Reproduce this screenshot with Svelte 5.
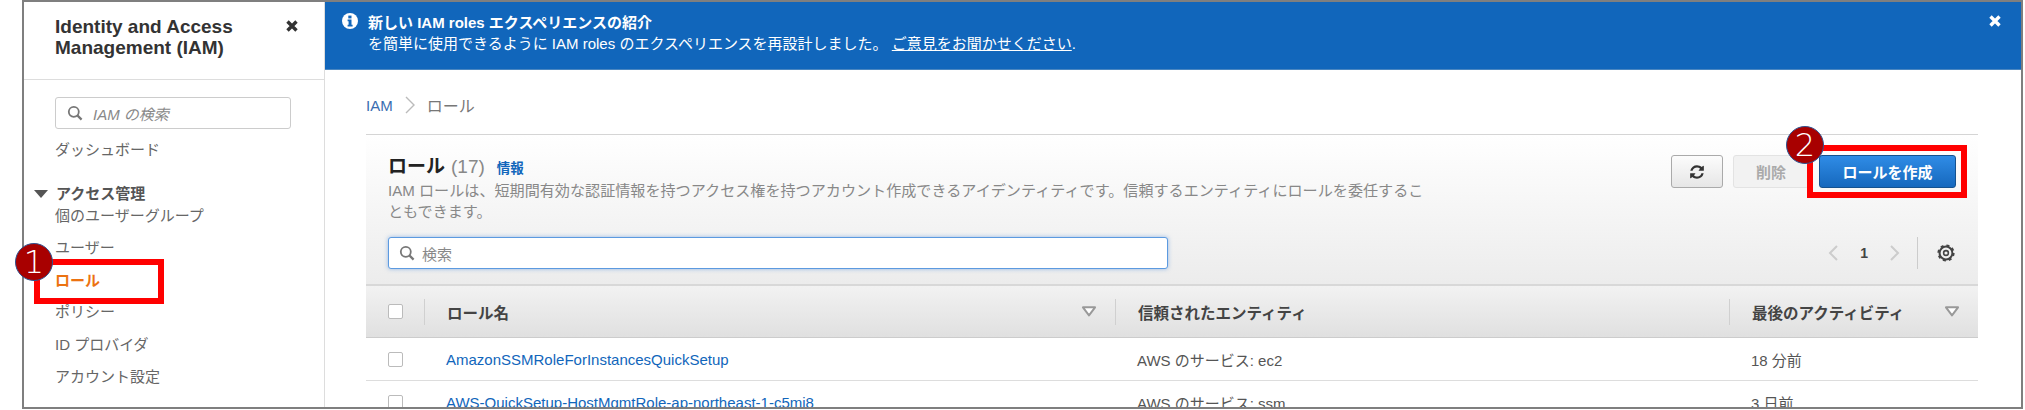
<script lang="ts">
  const navItems = [
    { label: '個のユーザーグループ', top: 2 },
    { label: 'ユーザー', top: 12 },
    { label: 'ロール', top: 13, active: true },
    { label: 'ポリシー', top: 11 },
    { label: 'ID プロバイダ', top: 13 },
    { label: 'アカウント設定', top: 12 }
  ];
  const rows = [
    { name: 'AmazonSSMRoleForInstancesQuickSetup', entity: 'AWS のサービス: ec2', last: '18 分前' },
    { name: 'AWS-QuickSetup-HostMgmtRole-ap-northeast-1-c5mj8', entity: 'AWS のサービス: ssm', last: '3 日前' }
  ];
</script>

{#snippet closeIcon()}
  <svg viewBox="0 0 14 14" width="14" height="14"><path d="M2.5 2.5l9 9M11.5 2.5l-9 9" stroke="currentColor" stroke-width="3.4" fill="none" /></svg>
{/snippet}

{#snippet searchIcon()}
  <svg viewBox="0 0 16 16" width="16" height="16"><circle cx="6.8" cy="6.8" r="5" stroke="#777" stroke-width="1.8" fill="none" /><path d="M10.6 10.6l4 4" stroke="#777" stroke-width="2.2" /></svg>
{/snippet}

{#snippet sortIcon()}
  <svg viewBox="0 0 14 10" width="16" height="11"><path d="M1.5 1.2h11L7 8.6z" fill="#fff" stroke="#999" stroke-width="1.8" stroke-linejoin="round" /></svg>
{/snippet}

<div class="page">
  <div class="frame">
    <aside class="sidebar">
      <div class="side-head">
        <div class="side-title">Identity and Access<br />Management (IAM)</div>
        <span class="side-close">{@render closeIcon()}</span>
      </div>
      <div class="side-search">
        {@render searchIcon()}
        <span>IAM の検索</span>
      </div>
      <div class="nav-link dash">ダッシュボード</div>
      <div class="nav-group">
        <svg class="caret" viewBox="0 0 14 8" width="14" height="8"><path d="M0 0h14L7 8z" fill="#555" /></svg>
        アクセス管理
      </div>
      {#each navItems as item}
        <div class="nav-link" class:active={item.active} style="margin-top: {item.top}px">{item.label}</div>
      {/each}
    </aside>

    <main class="main">
      <div class="banner">
        <svg class="info" viewBox="0 0 16 16" width="16" height="16">
          <circle cx="8" cy="8" r="8" fill="#fff" />
          <rect x="6.3" y="2.6" width="3.2" height="2.8" fill="#1166bb" />
          <path d="M5.6 6.6h3.9v5.2h1.1v1.7H5.6v-1.7h1v-3.5h-1z" fill="#1166bb" />
        </svg>
        <div class="banner-text">
          <div class="banner-title">新しい IAM roles エクスペリエンスの紹介</div>
          <div class="banner-body">を簡単に使用できるように IAM roles のエクスペリエンスを再設計しました。 <u>ご意見をお聞かせください</u>.</div>
        </div>
        <span class="banner-close">{@render closeIcon()}</span>
      </div>

      <div class="content">
        <div class="crumbs">
          <span class="crumb-link">IAM</span>
          <svg viewBox="0 0 10 18" width="10" height="18"><path d="M1 1l8 8-8 8" stroke="#bbb" stroke-width="1.4" fill="none" /></svg>
          <span>ロール</span>
        </div>

        <section class="panel">
          <div class="panel-head">
            <div class="head-row">
              <div class="head-text">
                <div class="title-line">
                  <h1>ロール</h1>
                  <span class="count">(17)</span>
                  <span class="info-link">情報</span>
                </div>
                <p>IAM ロールは、短期間有効な認証情報を持つアクセス権を持つアカウント作成できるアイデンティティです。信頼するエンティティにロールを委任することもできます。</p>
              </div>
              <div class="actions">
                <button class="btn refresh" aria-label="更新">
                  <svg viewBox="0 0 1792 1792" width="16" height="16"><path fill="#333" d="M1639 1056q0 5-1 7-64 268-268 434.5t-478 166.5q-146 0-282.5-55t-243.5-157l-129 129q-19 19-45 19t-45-19-19-45v-448q0-26 19-45t45-19h448q26 0 45 19t19 45-19 45l-137 137q71 66 161 102t187 36q134 0 250-65t186-179q11-17 53-117 8-23 30-23h192q13 0 22.5 9.5t9.5 22.5zm25-800v448q0 26-19 45t-45 19h-448q-26 0-45-19t-19-45 19-45l138-138q-148-137-349-137-134 0-250 65t-186 179q-11 17-53 117-8 23-30 23h-199q-13 0-22.5-9.5t-9.5-22.5v-7q65-268 270-434.5t480-166.5q146 0 284 55.5t245 156.5l130-129q19-19 45-19t45 19 19 45z" /></svg>
                </button>
                <button class="btn delete">削除</button>
                <button class="btn primary">ロールを作成</button>
              </div>
            </div>
            <div class="filter-row">
              <div class="table-search">
                {@render searchIcon()}
                <span>検索</span>
              </div>
              <div class="pager">
                <svg viewBox="0 0 10 16" width="10" height="16"><path d="M9 1L2 8l7 7" stroke="#ccc" stroke-width="2" fill="none" /></svg>
                <span class="page-num">1</span>
                <svg viewBox="0 0 10 16" width="10" height="16"><path d="M1 1l7 7-7 7" stroke="#ccc" stroke-width="2" fill="none" /></svg>
                <span class="pager-sep"></span>
                <svg viewBox="0 0 18 18" width="18" height="18">
                  <circle cx="9" cy="9" r="6.4" fill="none" stroke="#444" stroke-width="2" />
                  <circle cx="9" cy="9" r="7.6" fill="none" stroke="#444" stroke-width="2" stroke-dasharray="3 3" />
                  <circle cx="9" cy="9" r="2.4" fill="none" stroke="#444" stroke-width="1.6" />
                </svg>
              </div>
            </div>
          </div>

          <div class="table-head table-grid">
            <span class="check-cell"><span class="check"></span></span>
            <span class="th">ロール名 <span class="sort">{@render sortIcon()}</span></span>
            <span class="th">信頼されたエンティティ</span>
            <span class="th">最後のアクティビティ <span class="sort">{@render sortIcon()}</span></span>
          </div>
          {#each rows as row}
            <div class="table-row table-grid">
              <span class="check-cell"><span class="check"></span></span>
              <span class="td link">{row.name}</span>
              <span class="td">{row.entity}</span>
              <span class="td">{row.last}</span>
            </div>
          {/each}
        </section>
      </div>
    </main>
  </div>

  <div class="mark-box one"></div>
  <div class="mark-box two"></div>
  <div class="badge badge-one">1</div>
  <div class="badge badge-two">2</div>
</div>

<style>
  :global(body) {
    margin: 0;
    background: #fff;
  }
  .page {
    position: relative;
    width: 2025px;
    height: 410px;
    overflow: hidden;
    font-family: 'Liberation Sans', 'Noto Sans CJK JP', sans-serif;
    color: #555;
  }
  .frame {
    box-sizing: border-box;
    display: flex;
    width: 2001px;
    height: 409px;
    margin-left: 22px;
    border: 2px solid #7f7f7f;
    overflow: hidden;
    background: #fff;
  }
  .sidebar {
    flex: 0 0 301px;
    box-sizing: border-box;
    border-right: 1px solid #ddd;
    font-size: 15px;
  }
  .side-head {
    display: flex;
    justify-content: space-between;
    box-sizing: border-box;
    height: 78px;
    padding: 14px 25px 0 31px;
    border-bottom: 1px solid #ddd;
  }
  .side-title {
    font-size: 19px;
    line-height: 21px;
    font-weight: 700;
    color: #333;
  }
  .side-close {
    color: #333;
    margin-top: 3px;
  }
  .side-search {
    display: flex;
    align-items: center;
    gap: 10px;
    box-sizing: border-box;
    width: 236px;
    height: 32px;
    margin: 17px 0 0 31px;
    padding-left: 11px;
    border: 1px solid #ccc;
    border-radius: 3px;
    font-size: 15px;
    font-style: italic;
    color: #888;
  }
  .nav-link {
    margin-left: 31px;
    line-height: 20px;
    color: #666;
  }
  .nav-link.dash {
    margin-top: 11px;
  }
  .nav-link.active {
    color: #ec7211;
    font-weight: 700;
  }
  .nav-group {
    position: relative;
    margin: 24px 0 0 32px;
    line-height: 20px;
    font-weight: 700;
    color: #555;
  }
  .caret {
    position: absolute;
    left: -22px;
    top: 6px;
  }
  .main {
    flex: 1;
    min-width: 0;
  }
  .banner {
    display: flex;
    box-sizing: border-box;
    height: 68px;
    padding: 10px 19px 0 17px;
    background: #1166bb;
    border-bottom: 1px solid #4a86c0;
    color: #fff;
  }
  .info {
    margin: 1px 10px 0 0;
    flex: none;
  }
  .banner-text {
    flex: 1;
    font-size: 15px;
    line-height: 21px;
  }
  .banner-title {
    font-weight: 700;
  }
  .banner-close {
    color: #fff;
    margin-top: 2px;
  }
  .content {
    padding: 0 43px 0 41px;
  }
  .crumbs {
    display: flex;
    align-items: center;
    gap: 12px;
    box-sizing: border-box;
    height: 65px;
    padding-top: 6px;
    border-bottom: 1px solid #d5d5d5;
    font-size: 16px;
    color: #777;
  }
  .crumb-link {
    color: #3a6db0;
    font-size: 15px;
  }
  .panel-head {
    padding: 20px 22px 15px 22px;
    background: linear-gradient(#fff, #ececec);
    border-bottom: 2px solid #d8d8d8;
  }
  .head-row {
    display: flex;
    justify-content: space-between;
    height: 82px;
  }
  .head-text {
    width: 1042px;
  }
  .title-line {
    display: flex;
    align-items: baseline;
    gap: 6px;
    height: 24px;
  }
  h1 {
    margin: 0;
    font-size: 19px;
    line-height: 24px;
    color: #222;
  }
  .count {
    font-size: 19px;
    color: #888;
  }
  .info-link {
    margin-left: 6px;
    font-size: 13.5px;
    font-weight: 700;
    color: #1166bb;
  }
  p {
    margin: 1px 0 0;
    font-size: 15.1px;
    line-height: 21px;
    color: #888;
  }
  .actions {
    display: flex;
    gap: 10px;
    height: 33px;
    margin-top: 0;
    margin-right: 0;
  }
  .btn {
    box-sizing: border-box;
    height: 33px;
    padding: 0;
    border-radius: 3px;
    font-family: inherit;
    font-size: 15px;
    font-weight: 700;
  }
  .refresh {
    display: flex;
    align-items: center;
    justify-content: center;
    width: 52px;
    border: 1px solid #aaa;
    background: linear-gradient(#fcfcfc, #e6e6e6);
  }
  .delete {
    width: 76px;
    border: 1px solid #e3e3e3;
    background: #f2f2f2;
    color: #aaa;
  }
  .primary {
    width: 137px;
    border: 1px solid #15528f;
    background: linear-gradient(#2f8ce6, #1668bd);
    color: #fff;
  }
  .filter-row {
    display: flex;
    justify-content: space-between;
    align-items: center;
  }
  .table-search {
    display: flex;
    align-items: center;
    gap: 7px;
    box-sizing: border-box;
    width: 780px;
    height: 32px;
    padding-left: 10px;
    background: #fff;
    border: 1px solid #5c9ae0;
    border-radius: 3px;
    box-shadow: 0 0 4px rgba(60, 130, 220, 0.5);
    font-size: 15px;
    color: #888;
  }
  .pager {
    display: flex;
    align-items: center;
    height: 32px;
    margin-right: 1px;
  }
  .page-num {
    margin: 0 22px;
    font-size: 14px;
    font-weight: 700;
    color: #444;
  }
  .pager-sep {
    height: 32px;
    margin: 0 19px 0 17px;
    border-left: 1px solid #ccc;
  }
  .table-grid {
    display: grid;
    grid-template-columns: 58px 691px 614px 1fr;
  }
  .table-head {
    box-sizing: border-box;
    height: 52px;
    align-items: center;
    background: linear-gradient(#f2f2f2, #e0e0e0);
    border-bottom: 1px solid #ccc;
  }
  .th {
    display: flex;
    align-items: center;
    justify-content: space-between;
    height: 26px;
    padding: 0 18px 0 22px;
    border-left: 1px solid #d0d0d0;
    font-size: 15.5px;
    font-weight: 700;
    color: #444;
  }
  .sort {
    display: flex;
  }
  .check-cell {
    display: flex;
    padding-left: 22px;
  }
  .check {
    box-sizing: border-box;
    width: 15px;
    height: 15px;
    background: #fff;
    border: 1px solid #bbb;
    border-radius: 2px;
  }
  .table-row {
    height: 42px;
    align-items: center;
    border-bottom: 1px solid #ddd;
    box-sizing: content-box;
  }
  .td {
    padding-left: 22px;
    font-size: 15px;
    color: #555;
  }
  .td.link {
    color: #1166bb;
  }
  .mark-box {
    position: absolute;
    box-sizing: border-box;
    border: 6px solid #ff0000;
  }
  .mark-box.one {
    left: 34px;
    top: 259px;
    width: 130px;
    height: 45px;
  }
  .mark-box.two {
    left: 1807px;
    top: 145px;
    width: 160px;
    height: 53px;
  }
  .badge {
    position: absolute;
    box-sizing: border-box;
    display: flex;
    align-items: center;
    justify-content: center;
    width: 38px;
    height: 38px;
    border-radius: 50%;
    background: #a80000;
    border: 1.5px solid #2f528f;
    color: #fff;
    font-size: 32px;
    font-weight: 200;
    font-family: 'DejaVu Sans', sans-serif;
  }
  .badge-one {
    left: 15px;
    top: 243px;
  }
  .badge-two {
    left: 1786px;
    top: 126px;
  }
</style>
